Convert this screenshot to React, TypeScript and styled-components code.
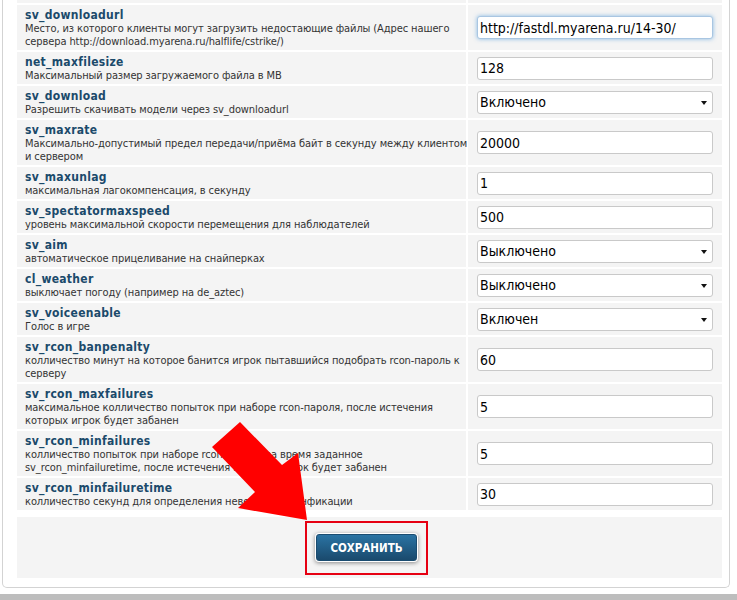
import React from "react";
import styled, { createGlobalStyle } from "styled-components";

const GlobalStyle = createGlobalStyle`
  html, body { margin: 0; padding: 0; background: #fff; }
  body { font-family: "DejaVu Sans Condensed", Tahoma, "DejaVu Sans", sans-serif; }
  * { box-sizing: border-box; }
`;

const Page = styled.div`
  position: relative;
  width: 737px;
  height: 600px;
  overflow: hidden;
  background: #fff;
`;

const Panel = styled.div`
  margin-left: 2px;
  width: 728px;
  border: 1px solid #d3d3d3;
  border-top: none;
  border-radius: 0 0 5px 5px;
  padding: 0 7px 9px 14px;
`;

const SettingsGrid = styled.div`
  display: grid;
  grid-template-columns: 449px 254px;
  gap: 2px;
`;

const StubCell = styled.div`
  height: 3px;
  background: #f4f4f4;
`;

const LabelCell = styled.div`
  background: #f4f4f4;
  padding: 4px 8px 2px;
`;

const Title = styled.div`
  font-weight: bold;
  font-size: 12px;
  line-height: 13px;
  letter-spacing: 0.3px;
  color: #1b4a6b;
`;

const Desc = styled.div`
  font-size: 11px;
  line-height: 13px;
  letter-spacing: -0.1px;
  color: #333;
  white-space: nowrap;
`;

const ValueCell = styled.div`
  background: #f4f4f4;
  display: flex;
  align-items: center;
  padding: 0 9px;
`;

const TextInput = styled.input<{ $focused?: boolean }>`
  width: 236px;
  height: 23px;
  border: 1px solid ${(p) => (p.$focused ? "#a9c6e2" : "#c9c9c9")};
  border-radius: 3px;
  padding: 0 2px;
  font-family: inherit;
  font-size: 14px;
  color: #000;
  background: #fff;
  outline: none;
  box-shadow: ${(p) =>
    p.$focused ? "0 0 4px rgba(90, 160, 220, 0.7)" : "none"};
`;

const SelectWrap = styled.div`
  position: relative;
  width: 236px;
  height: 23px;
  &::after {
    content: "";
    position: absolute;
    right: 6px;
    top: 10px;
    border-left: 3.5px solid transparent;
    border-right: 3.5px solid transparent;
    border-top: 4px solid #111;
    pointer-events: none;
  }
`;

const Select = styled.select`
  appearance: none;
  -webkit-appearance: none;
  width: 100%;
  height: 100%;
  border: 1px solid #c9c9c9;
  border-radius: 3px;
  padding: 0 2px;
  font-family: inherit;
  font-size: 14px;
  color: #000;
  background: #fff;
  outline: none;
`;

const Footer = styled.div`
  margin-top: 7px;
  height: 61px;
  background: #f4f4f4;
  display: flex;
  align-items: center;
  justify-content: center;
  padding-right: 6px;
`;

const ButtonFrame = styled.div`
  position: relative;
  display: flex;
`;

const Highlight = styled.div`
  position: absolute;
  inset: -13px -11px -14px -11px;
  border: 2px solid #e60012;
  pointer-events: none;
`;

const SaveButton = styled.button`
  height: 27px;
  padding: 0 13px;
  border: 1px solid #1b4c70;
  border-radius: 3px;
  background: linear-gradient(#2a73a3, #1a4a6d);
  color: #fff;
  font-family: inherit;
  font-weight: bold;
  font-size: 11.5px;
  letter-spacing: 0;
  box-shadow: 0 0 0 1px #fff, 0 1px 4px 1px rgba(0, 0, 0, 0.45);
  cursor: pointer;
`;

const BottomBand = styled.div`
  margin-top: 6px;
  height: 20px;
  background: #bdbdbd;
`;

const ArrowLayer = styled.svg`
  position: absolute;
  left: 0;
  top: 0;
  pointer-events: none;
`;

type Setting = {
  name: string;
  desc: string[];
  kind: "text" | "select";
  value: string;
  focused?: boolean;
};

const settings: Setting[] = [
  {
    name: "sv_downloadurl",
    desc: [
      "Место, из которого клиенты могут загрузить недостающие файлы (Адрес нашего",
      "сервера http://download.myarena.ru/halflife/cstrike/)",
    ],
    kind: "text",
    value: "http://fastdl.myarena.ru/14-30/",
    focused: true,
  },
  {
    name: "net_maxfilesize",
    desc: ["Максимальный размер загружаемого файла в MB"],
    kind: "text",
    value: "128",
  },
  {
    name: "sv_download",
    desc: ["Разрешить скачивать модели через sv_downloadurl"],
    kind: "select",
    value: "Включено",
  },
  {
    name: "sv_maxrate",
    desc: [
      "Максимально-допустимый предел передачи/приёма байт в секунду между клиентом",
      "и сервером",
    ],
    kind: "text",
    value: "20000",
  },
  {
    name: "sv_maxunlag",
    desc: ["максимальная лагокомпенсация, в секунду"],
    kind: "text",
    value: "1",
  },
  {
    name: "sv_spectatormaxspeed",
    desc: ["уровень максимальной скорости перемещения для наблюдателей"],
    kind: "text",
    value: "500",
  },
  {
    name: "sv_aim",
    desc: ["автоматическое прицеливание на снайперках"],
    kind: "select",
    value: "Выключено",
  },
  {
    name: "cl_weather",
    desc: ["выключает погоду (например на de_aztec)"],
    kind: "select",
    value: "Выключено",
  },
  {
    name: "sv_voiceenable",
    desc: ["Голос в игре"],
    kind: "select",
    value: "Включен",
  },
  {
    name: "sv_rcon_banpenalty",
    desc: [
      "колличество минут на которое банится игрок пытавшийся подобрать rcon-пароль к",
      "серверу",
    ],
    kind: "text",
    value: "60",
  },
  {
    name: "sv_rcon_maxfailures",
    desc: [
      "максимальное колличество попыток при наборе rcon-пароля, после истечения",
      "которых игрок будет забанен",
    ],
    kind: "text",
    value: "5",
  },
  {
    name: "sv_rcon_minfailures",
    desc: [
      "колличество попыток при наборе rcon-пароля за время заданное",
      "sv_rcon_minfailuretime, после истечения которых игрок будет забанен",
    ],
    kind: "text",
    value: "5",
  },
  {
    name: "sv_rcon_minfailuretime",
    desc: ["колличество секунд для определения неверной аутенфикации"],
    kind: "text",
    value: "30",
  },
];

function ValueControl({ s }: { s: Setting }) {
  if (s.kind === "select") {
    return (
      <SelectWrap>
        <Select defaultValue={s.value}>
          <option>{s.value}</option>
        </Select>
      </SelectWrap>
    );
  }
  return <TextInput $focused={s.focused} defaultValue={s.value} />;
}

export default function App() {
  return (
    <Page>
      <GlobalStyle />
      <Panel>
        <SettingsGrid>
          <StubCell />
          <StubCell />
          {settings.map((s) => (
            <React.Fragment key={s.name}>
              <LabelCell>
                <Title>{s.name}</Title>
                {s.desc.map((line, i) => (
                  <Desc key={i}>{line}</Desc>
                ))}
              </LabelCell>
              <ValueCell>
                <ValueControl s={s} />
              </ValueCell>
            </React.Fragment>
          ))}
        </SettingsGrid>
        <Footer>
          <ButtonFrame>
            <SaveButton type="button">СОХРАНИТЬ</SaveButton>
            <Highlight />
          </ButtonFrame>
        </Footer>
      </Panel>
      <BottomBand />
      <ArrowLayer width="737" height="600" viewBox="0 0 737 600">
        <polygon
          points="240,422 282,465 298,453 307,520 238,508 255,492 212,447"
          fill="#ff0000"
        />
      </ArrowLayer>
    </Page>
  );
}
